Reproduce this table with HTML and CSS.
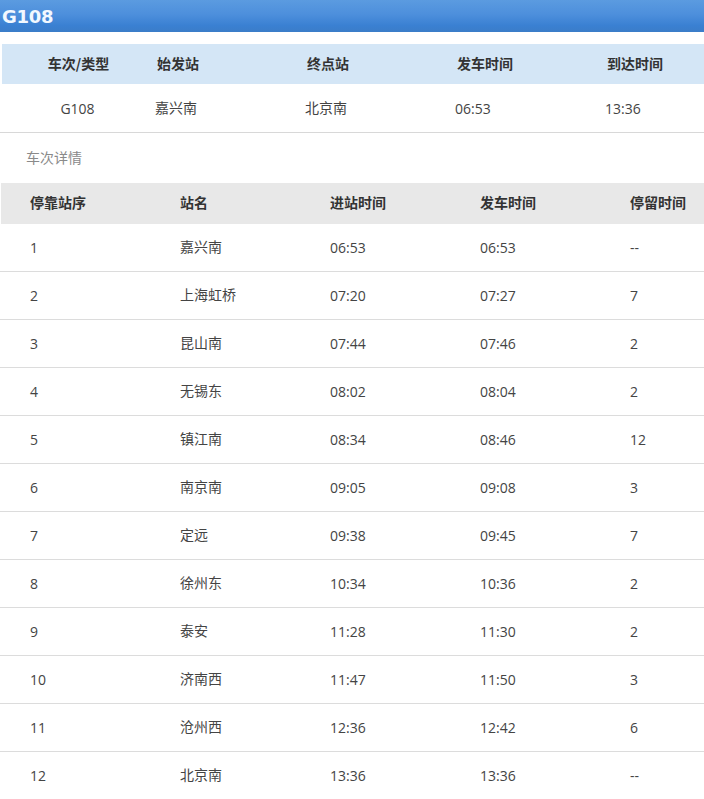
FILE: index.html
```html
<!DOCTYPE html>
<html lang="zh-CN">
<head>
<meta charset="utf-8">
<title>G108</title>
<link rel="stylesheet" href="styles.css">
</head>
<body>
<div class="page">
  <div class="titlebar"><span class="title">G108</span></div>

  <div class="summary">
    <div class="srow shead zh">
      <div class="c1">车次/类型</div><div>始发站</div><div>终点站</div><div>发车时间</div><div>到达时间</div>
    </div>
    <div class="srow sbody">
      <div class="c1">G108</div><div class="zh">嘉兴南</div><div class="zh">北京南</div><div>06:53</div><div>13:36</div>
    </div>
  </div>

  <div class="section-label zh">车次详情</div>

  <div class="detail">
    <div class="drow dhead zh"><div>停靠站序</div><div>站名</div><div>进站时间</div><div>发车时间</div><div>停留时间</div></div>
    <div class="drow"><div>1</div><div class="zh">嘉兴南</div><div>06:53</div><div>06:53</div><div>--</div></div>
    <div class="drow"><div>2</div><div class="zh">上海虹桥</div><div>07:20</div><div>07:27</div><div>7</div></div>
    <div class="drow"><div>3</div><div class="zh">昆山南</div><div>07:44</div><div>07:46</div><div>2</div></div>
    <div class="drow"><div>4</div><div class="zh">无锡东</div><div>08:02</div><div>08:04</div><div>2</div></div>
    <div class="drow"><div>5</div><div class="zh">镇江南</div><div>08:34</div><div>08:46</div><div>12</div></div>
    <div class="drow"><div>6</div><div class="zh">南京南</div><div>09:05</div><div>09:08</div><div>3</div></div>
    <div class="drow"><div>7</div><div class="zh">定远</div><div>09:38</div><div>09:45</div><div>7</div></div>
    <div class="drow"><div>8</div><div class="zh">徐州东</div><div>10:34</div><div>10:36</div><div>2</div></div>
    <div class="drow"><div>9</div><div class="zh">泰安</div><div>11:28</div><div>11:30</div><div>2</div></div>
    <div class="drow"><div>10</div><div class="zh">济南西</div><div>11:47</div><div>11:50</div><div>3</div></div>
    <div class="drow"><div>11</div><div class="zh">沧州西</div><div>12:36</div><div>12:42</div><div>6</div></div>
    <div class="drow"><div>12</div><div class="zh">北京南</div><div>13:36</div><div>13:36</div><div>--</div></div>
  </div>
</div>
</body>
</html>
```

FILE: styles.css
```css
* { box-sizing: border-box; }
html, body { margin: 0; padding: 0; background: #fff; }
body {
  font-family: "Open Sans", "Noto Sans CJK SC", sans-serif;
  font-size: 14px;
  color: #444;
  overflow: hidden;
}
.zh, .zh > div {
  font-family: "Noto Sans CJK SC", "Open Sans", sans-serif;
}
.srow > div.zh, .drow > div.zh, .shead > div, .dhead > div {
  padding-bottom: 3px;
}
.page { width: 704px; }

.titlebar {
  height: 32px;
  background: linear-gradient(to bottom, #5b9be0 0%, #4d8fdc 45%, #3a80d2 80%, #3b7dc8 100%);
  display: flex;
  align-items: center;
  padding-left: 2px;
}
.title {
  font-family: "DejaVu Sans", sans-serif;
  font-weight: bold;
  font-size: 18px;
  color: #f2f8ff;
  letter-spacing: -0.3px;
}

.summary { margin-top: 12px; }
.srow {
  display: grid;
  grid-template-columns: 155px 150px 150px 150px 1fr;
  align-items: center;
}
.srow .c1 { text-align: center; }
.shead {
  height: 40px;
  margin-left: 2px;
  background: #d4e6f6;
  font-weight: bold;
  color: #333;
}
.shead > div:first-child { margin-left: -2px; }
.sbody {
  height: 49px;
  border-bottom: 1px solid #d8d8d8;
}

.section-label {
  height: 50px;
  display: flex;
  align-items: center;
  padding-left: 26px;
  padding-bottom: 2px;
  color: #8a8a8a;
  font-size: 14px;
}

.detail { width: 704px; }
.drow {
  display: grid;
  grid-template-columns: 150px 150px 150px 150px 1fr;
  padding-left: 30px;
  height: 48px;
  align-items: center;
  border-top: 1px solid #dcdcdc;
}
.dhead {
  height: 41px;
  margin-left: 1px;
  padding-left: 29px;
  background: #e8e8e8;
  border-top: none;
  font-weight: bold;
  color: #333;
}
.dhead + .drow { border-top: none; height: 47px; }
```
